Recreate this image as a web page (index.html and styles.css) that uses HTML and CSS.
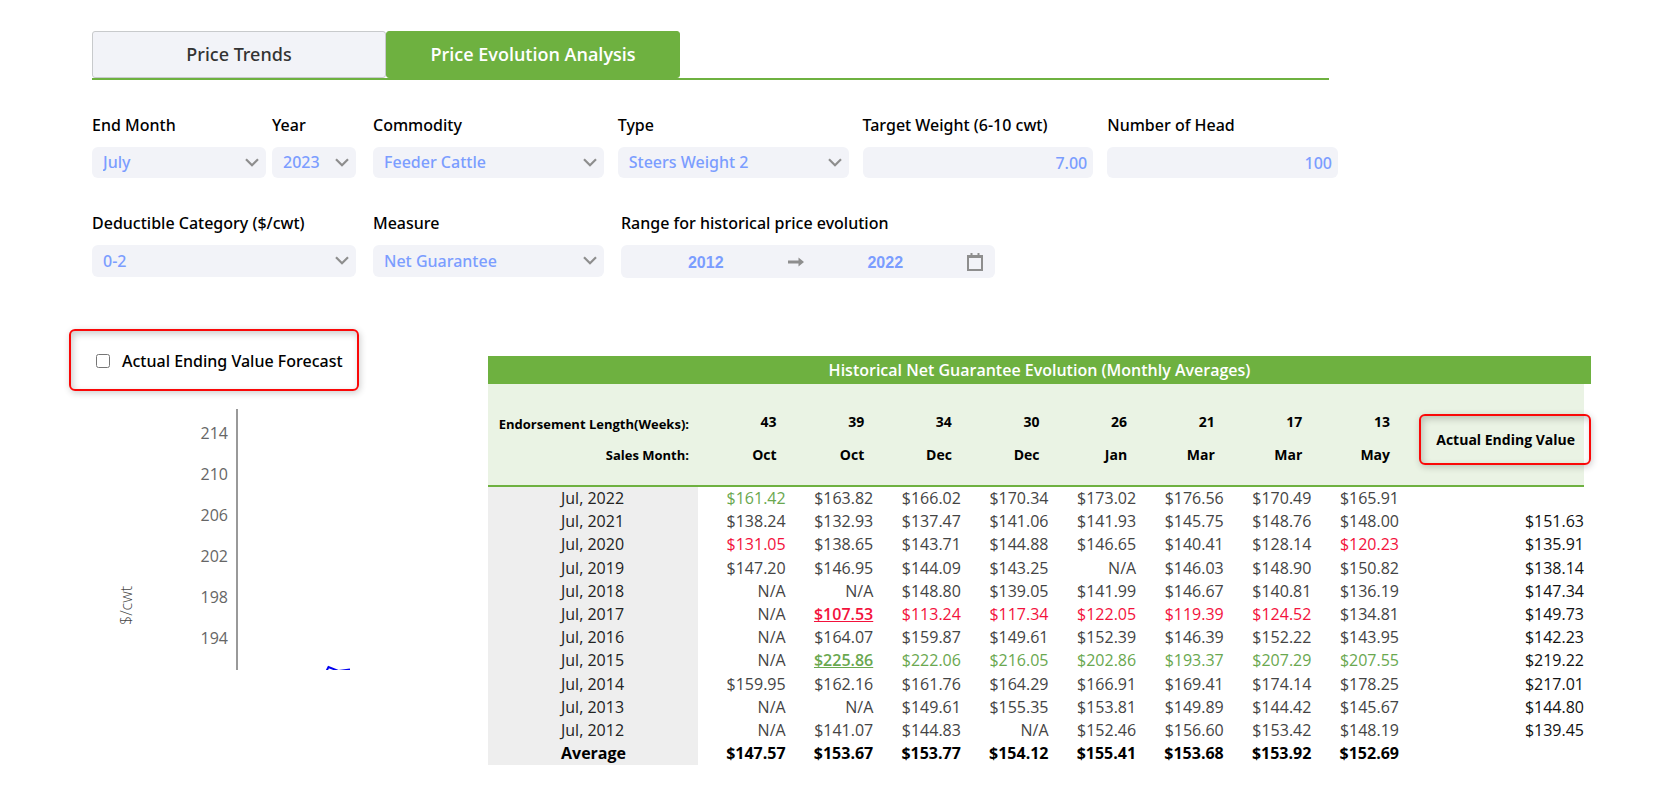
FILE: index.html
```html
<!DOCTYPE html>
<html lang="en">
<head>
<meta charset="utf-8">
<title>Price Evolution Analysis</title>
<link rel="stylesheet" href="styles.css">
</head>
<body>
<main class="page">
  <nav class="tabs">
    <button class="tab" type="button">Price Trends</button>
    <button class="tab tab-active" type="button">Price Evolution Analysis</button>
  </nav>

  <form class="filters">
    <div class="row">
      <div class="pair">
        <div class="field month"><label for="month">End Month</label>
          <div class="control"><select id="month"><option>July</option></select><svg class="chevron" viewBox="0 0 14 9"><path d="M1 1.3l6 6 6-6"/></svg></div></div>
        <div class="field year"><label for="year">Year</label>
          <div class="control"><select id="year"><option>2023</option></select><svg class="chevron" viewBox="0 0 14 9"><path d="M1 1.3l6 6 6-6"/></svg></div></div>
      </div>
      <div class="field"><label for="commodity">Commodity</label>
        <div class="control"><select id="commodity"><option>Feeder Cattle</option></select><svg class="chevron" viewBox="0 0 14 9"><path d="M1 1.3l6 6 6-6"/></svg></div></div>
      <div class="field"><label for="type">Type</label>
        <div class="control"><select id="type"><option>Steers Weight 2</option></select><svg class="chevron" viewBox="0 0 14 9"><path d="M1 1.3l6 6 6-6"/></svg></div></div>
      <div class="field"><label for="weight">Target Weight (6-10 cwt)</label>
        <div class="control"><input id="weight" type="text" value="7.00"></div></div>
      <div class="field"><label for="head">Number of Head</label>
        <div class="control"><input id="head" type="text" value="100"></div></div>
    </div>
    <div class="row row-second">
      <div class="field wide"><label for="deductible">Deductible Category ($/cwt)</label>
        <div class="control"><select id="deductible"><option>0-2</option></select><svg class="chevron" viewBox="0 0 14 9"><path d="M1 1.3l6 6 6-6"/></svg></div></div>
      <div class="field"><label for="measure">Measure</label>
        <div class="control"><select id="measure"><option>Net Guarantee</option></select><svg class="chevron" viewBox="0 0 14 9"><path d="M1 1.3l6 6 6-6"/></svg></div></div>
      <div class="field range-field"><label for="from">Range for historical price evolution</label>
        <div class="range">
          <input id="from" type="text" value="2012">
          <svg class="arrow" viewBox="0 0 16 10"><path d="M0 3.4h10.5V.6L16 5l-5.500 4.400V6.600H0z"/></svg>
          <input type="text" value="2022" aria-label="Range end">
          <svg class="calendar" viewBox="0 0 16 18"><path d="M1 3h14v14H1zM1 4h14M4.500 0v3M11.500 0v3"/></svg>
        </div></div>
    </div>
  </form>

  <div class="content">
    <section class="chart-panel">
      <label class="callout forecast"><input type="checkbox">Actual Ending Value Forecast</label>
      <svg class="chart" viewBox="0 0 290 261" role="img" aria-label="Price chart">
        <path class="axis" d="M145 0v261"/>
        <g class="ticks">
          <text x="136" y="30">214</text><text x="136" y="71">210</text><text x="136" y="112">206</text>
          <text x="136" y="153">202</text><text x="136" y="194">198</text><text x="136" y="235">194</text>
        </g>
        <text class="axis-title" transform="translate(40 216) rotate(-90)">$/cwt</text>
        <path class="series" d="M234 263l2.500-5 10 4L258 260.500"/>
      </svg>
    </section>

    <section class="table-panel">
      <h2 class="table-title">Historical Net Guarantee Evolution (Monthly Averages)</h2>
      <div class="table-wrap">
      <table>
        <colgroup><col class="col-label"><col span="8"><col class="col-actual"></colgroup>
        <thead>
          <tr class="weeks"><th>Endorsement Length(Weeks):</th><th>43</th><th>39</th><th>34</th><th>30</th><th>26</th><th>21</th><th>17</th><th>13</th><th class="actual" rowspan="2"><div class="callout">Actual Ending Value</div></th></tr>
          <tr class="months"><th>Sales Month:</th><th>Oct</th><th>Oct</th><th>Dec</th><th>Dec</th><th>Jan</th><th>Mar</th><th>Mar</th><th>May</th></tr>
        </thead>
        <tbody>
          <tr><th>Jul, 2022</th><td class="high">$161.42</td><td>$163.82</td><td>$166.02</td><td>$170.34</td><td>$173.02</td><td>$176.56</td><td>$170.49</td><td>$165.91</td><td></td></tr>
          <tr><th>Jul, 2021</th><td>$138.24</td><td>$132.93</td><td>$137.47</td><td>$141.06</td><td>$141.93</td><td>$145.75</td><td>$148.76</td><td>$148.00</td><td>$151.63</td></tr>
          <tr><th>Jul, 2020</th><td class="low">$131.05</td><td>$138.65</td><td>$143.71</td><td>$144.88</td><td>$146.65</td><td>$140.41</td><td>$128.14</td><td class="low">$120.23</td><td>$135.91</td></tr>
          <tr><th>Jul, 2019</th><td>$147.20</td><td>$146.95</td><td>$144.09</td><td>$143.25</td><td>N/A</td><td>$146.03</td><td>$148.90</td><td>$150.82</td><td>$138.14</td></tr>
          <tr><th>Jul, 2018</th><td>N/A</td><td>N/A</td><td>$148.80</td><td>$139.05</td><td>$141.99</td><td>$146.67</td><td>$140.81</td><td>$136.19</td><td>$147.34</td></tr>
          <tr><th>Jul, 2017</th><td>N/A</td><td class="low extreme">$107.53</td><td class="low">$113.24</td><td class="low">$117.34</td><td class="low">$122.05</td><td class="low">$119.39</td><td class="low">$124.52</td><td>$134.81</td><td>$149.73</td></tr>
          <tr><th>Jul, 2016</th><td>N/A</td><td>$164.07</td><td>$159.87</td><td>$149.61</td><td>$152.39</td><td>$146.39</td><td>$152.22</td><td>$143.95</td><td>$142.23</td></tr>
          <tr><th>Jul, 2015</th><td>N/A</td><td class="high extreme">$225.86</td><td class="high">$222.06</td><td class="high">$216.05</td><td class="high">$202.86</td><td class="high">$193.37</td><td class="high">$207.29</td><td class="high">$207.55</td><td>$219.22</td></tr>
          <tr><th>Jul, 2014</th><td>$159.95</td><td>$162.16</td><td>$161.76</td><td>$164.29</td><td>$166.91</td><td>$169.41</td><td>$174.14</td><td>$178.25</td><td>$217.01</td></tr>
          <tr><th>Jul, 2013</th><td>N/A</td><td>N/A</td><td>$149.61</td><td>$155.35</td><td>$153.81</td><td>$149.89</td><td>$144.42</td><td>$145.67</td><td>$144.80</td></tr>
          <tr><th>Jul, 2012</th><td>N/A</td><td>$141.07</td><td>$144.83</td><td>N/A</td><td>$152.46</td><td>$156.60</td><td>$153.42</td><td>$148.19</td><td>$139.45</td></tr>
        </tbody>
        <tfoot>
          <tr><th>Average</th><td>$147.57</td><td>$153.67</td><td>$153.77</td><td>$154.12</td><td>$155.41</td><td>$153.68</td><td>$153.92</td><td>$152.69</td><td></td></tr>
        </tfoot>
      </table>
      </div>
    </section>
  </div>
</main>
</body>
</html>
```
FILE: styles.css
```css
* { box-sizing: border-box; }
body {
  margin: 0;
  background: #fff;
  color: #000;
  font: 400 16px/22px "Open Sans", "Noto Sans", sans-serif;
}
input, select, button { font: inherit; margin: 0; }
.page { padding: 31px 64px 24px 92px; }

/* tabs */
.tabs {
  display: flex;
  max-width: 1237px;
  border-bottom: 2px solid #6eb140;
}
.tab {
  width: 294px;
  height: 47px;
  padding: 0 0 2px;
  border: 1px solid #c8cacc;
  border-radius: 3px;
  background: #f2f3f8;
  color: #333;
  font-family: "Noto Sans", "Open Sans", sans-serif;
  font-size: 18px;
  font-weight: 500;
}
.tab-active {
  border-color: #6eb140;
  background: #6eb140;
  color: #fff;
  font-family: "Open Sans", "Noto Sans", sans-serif;
  font-weight: 600;
}

/* filters */
.row { display: flex; gap: 14px; max-width: 1246px; margin-top: 34px; }
.row-second { gap: 17px; }
.pair { display: flex; gap: 6px; flex: 0 0 267px; padding-right: 3px; }
.field {
  flex: 1 1 0;
  min-width: 0;
  font-family: "Noto Sans", "Open Sans", sans-serif;
  font-weight: 500;
}
.field > label { display: block; margin-bottom: 11px; white-space: nowrap; }
.field.month { flex: 0 0 174px; }
.field.year { flex: 1 1 84px; }
.row-second .field { flex: 0 0 231px; }
.row-second .wide { flex-basis: 264px; }
.row-second .range-field { flex-basis: 374px; }
.control { position: relative; }
.control select, .control input {
  display: block;
  width: 100%;
  height: 31px;
  padding: 0 11px 2px;
  border: 0;
  border-radius: 6px;
  background: #f2f3f8;
  color: #7b9dff;
  appearance: none;
}
.control input { padding: 0 6px; text-align: right; }
.row-second .control select { height: 32px; padding-bottom: 0; }
.chevron {
  position: absolute;
  right: 7px;
  top: 11px;
  width: 14px;
  height: 9px;
  pointer-events: none;
  fill: none;
  stroke: #8e8e8e;
  stroke-width: 2.200;
}
.range {
  display: flex;
  align-items: center;
  height: 33px;
  padding: 0 12px 0 3px;
  border-radius: 6px;
  background: #f2f3f8;
}
.range input {
  flex: 1 1 0;
  min-width: 0;
  padding: 2px 0 0;
  border: 0;
  background: none;
  color: #7b9dff;
  font: bold 16px/22px "Liberation Sans", Arial, sans-serif;
  text-align: center;
}
.arrow { width: 16px; height: 10px; fill: #8e8e8e; }
.calendar { width: 16px; height: 18px; fill: none; stroke: #8e8e8e; stroke-width: 2; }

/* lower area */
.content { display: flex; gap: 106px; margin-top: 51px; }
.chart-panel { flex: 0 0 290px; }
.callout {
  border: 2px solid #fa0808;
  border-radius: 6px;
  box-shadow: 1px 2px 7px rgba(0, 0, 0, .2), inset 2px 3px 7px rgba(0, 0, 0, .2);
}
.forecast {
  display: flex;
  align-items: center;
  width: 290px;
  height: 62px;
  margin: 0 0 18px -23px;
  padding: 2px 0 0 25px;
  font-family: "Noto Sans", "Open Sans", sans-serif;
  font-weight: 500;
  white-space: nowrap;
}
.forecast input { width: 14px; height: 14px; margin-right: 12px; }
.chart { display: block; width: 290px; height: 261px; }
.axis { stroke: #999; stroke-width: 2; }
.ticks text { fill: #666; text-anchor: end; font-size: 16px; }
.axis-title { fill: #444; font-size: 16px; font-weight: 300; }
.series { fill: none; stroke: #0000f0; stroke-width: 2; }

.table-panel { flex: 1 1 0; min-width: 0; padding-top: 27px; }
.table-title {
  margin: 0;
  height: 28px;
  background: #6eb140;
  color: #fff;
  font-size: 16px;
  font-weight: 600;
  line-height: 28px;
  text-align: center;
}
.table-wrap { padding-right: 7px; }
table {
  width: 100%;
  border-collapse: separate;
  border-spacing: 0;
  table-layout: fixed;
}
.col-label { width: 210px; }
.col-actual { width: 185px; }
th, td { padding: 0; text-align: right; white-space: nowrap; }
thead th {
  padding-right: 9px;
  background: #eaf3e4;
  font-size: 14px;
  font-weight: 700;
  line-height: 20px;
}
thead th:first-child { font-size: 13px; }
.weeks th { height: 55px; padding-bottom: 7px; vertical-align: bottom; }
.weeks th:first-child { padding-bottom: 5px; }
.months th { height: 48px; padding-top: 6px; vertical-align: top; }
.months th, .weeks .actual { border-bottom: 2px solid #6eb140; }
.weeks .actual { padding: 9px 0 0; vertical-align: middle; }
.actual .callout {
  width: 172px;
  height: 51px;
  margin: 0 -7px 0 auto;
  padding: 14px 14px 0 0;
}
tbody th, tbody td, tfoot th, tfoot td { height: 23px; line-height: 23px; color: #444; }
tbody tr:nth-child(4) > *, tbody tr:nth-child(9) > * { height: 24px; }
tbody th, tfoot th {
  background: #eee;
  color: #222;
  font-weight: 400;
  text-align: left;
  padding-left: 73px;
}
tbody td:last-child { color: #111; }
tfoot th, tfoot td { color: #000; font-weight: 700; }
tbody .high { color: #6aa84f; }
tbody .low { color: #f3123c; }
tbody .extreme { font-weight: 600; text-decoration: underline; }
```
